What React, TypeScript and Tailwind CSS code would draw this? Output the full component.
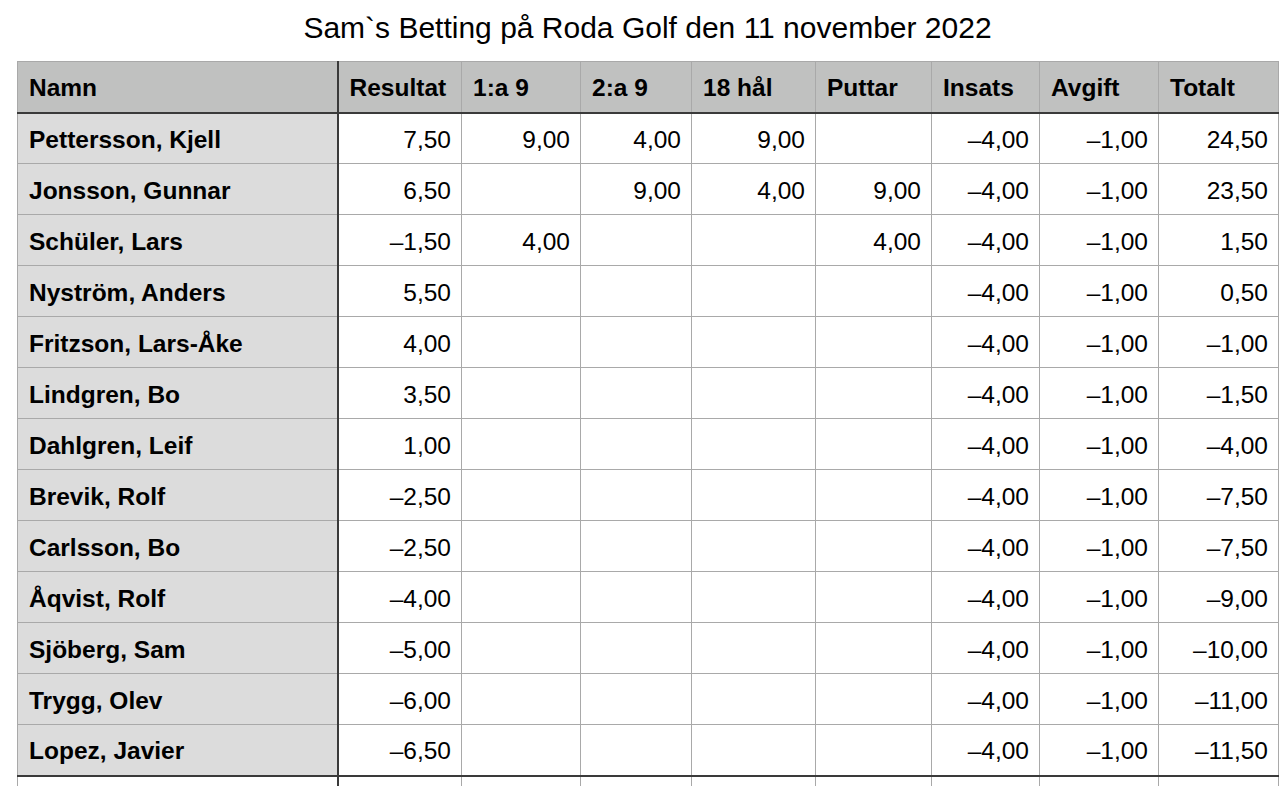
/**
 * Betting sheet — golf round results, one row per player.
 */
import React from "react";

type Row = {
  name: string;
  vals: string[]; // Resultat, 1:a 9, 2:a 9, 18 hål, Puttar, Insats, Avgift, Totalt
};

const HEADERS = ["Namn", "Resultat", "1:a 9", "2:a 9", "18 hål", "Puttar", "Insats", "Avgift", "Totalt"];
const COL_WIDTHS = ["w-[320px]", "w-[124px]", "w-[119px]", "w-[111px]", "w-[124px]", "w-[116px]", "w-[108px]", "w-[119px]", "w-[120px]"];

const ROWS: Row[] = [
  { name: "Pettersson, Kjell", vals: ["7,50", "9,00", "4,00", "9,00", "", "–4,00", "–1,00", "24,50"] },
  { name: "Jonsson, Gunnar", vals: ["6,50", "", "9,00", "4,00", "9,00", "–4,00", "–1,00", "23,50"] },
  { name: "Schüler, Lars", vals: ["–1,50", "4,00", "", "", "4,00", "–4,00", "–1,00", "1,50"] },
  { name: "Nyström, Anders", vals: ["5,50", "", "", "", "", "–4,00", "–1,00", "0,50"] },
  { name: "Fritzson, Lars-Åke", vals: ["4,00", "", "", "", "", "–4,00", "–1,00", "–1,00"] },
  { name: "Lindgren, Bo", vals: ["3,50", "", "", "", "", "–4,00", "–1,00", "–1,50"] },
  { name: "Dahlgren, Leif", vals: ["1,00", "", "", "", "", "–4,00", "–1,00", "–4,00"] },
  { name: "Brevik, Rolf", vals: ["–2,50", "", "", "", "", "–4,00", "–1,00", "–7,50"] },
  { name: "Carlsson, Bo", vals: ["–2,50", "", "", "", "", "–4,00", "–1,00", "–7,50"] },
  { name: "Åqvist, Rolf", vals: ["–4,00", "", "", "", "", "–4,00", "–1,00", "–9,00"] },
  { name: "Sjöberg, Sam", vals: ["–5,00", "", "", "", "", "–4,00", "–1,00", "–10,00"] },
  { name: "Trygg, Olev", vals: ["–6,00", "", "", "", "", "–4,00", "–1,00", "–11,00"] },
  { name: "Lopez, Javier", vals: ["–6,50", "", "", "", "", "–4,00", "–1,00", "–11,50"] },
];

export default function App() {
  return (
    <div className="h-[786px] w-[1286px] overflow-hidden bg-white font-['Liberation_Sans',Arial,sans-serif] text-black">
      <div className="ml-[17px] w-[1261px]">
        {/* Sheet title */}
        <h1 className="h-[61px] pt-[13px] text-center text-[30px] leading-none font-normal">
          Sam`s Betting på Roda Golf den 11 november 2022
        </h1>

        <table className="w-[1261px] table-fixed border-collapse text-[24.5px]">
          <colgroup>
            {COL_WIDTHS.map((w, i) => (
              <col key={i} className={w} />
            ))}
          </colgroup>
          <thead>
            <tr className="h-[51px] bg-[#c0c1c0]">
              {HEADERS.map((h, i) => (
                <th
                  key={h}
                  className={`border border-[#a9a9a9] border-b-2 border-b-[#3a3a3a] px-[11px] pt-[4px] text-left font-bold ${
                    i === 0 ? "border-r-2 border-r-[#3a3a3a]" : ""
                  }`}
                >
                  {h}
                </th>
              ))}
            </tr>
          </thead>
          <tbody>
            {ROWS.map((r, ri) => {
              const last = ri === ROWS.length - 1;
              return (
                <tr key={r.name} className="h-[51px]">
                  <td
                    className={`border border-[#a9a9a9] border-r-2 border-r-[#3a3a3a] bg-[#dcdcdc] px-[11px] pt-[4px] font-bold ${
                      last ? "border-b-2 border-b-[#3a3a3a]" : ""
                    }`}
                  >
                    {r.name}
                  </td>
                  {r.vals.map((v, vi) => (
                    <td
                      key={vi}
                      className={`border border-[#a9a9a9] px-[10px] pt-[4px] text-right ${
                        last ? "border-b-2 border-b-[#3a3a3a]" : ""
                      }`}
                    >
                      {v}
                    </td>
                  ))}
                </tr>
              );
            })}
          </tbody>
          <tfoot>
            {/* Footer row, cut off by the window edge */}
            <tr className="h-[51px]">
              {HEADERS.map((h, i) => (
                <td
                  key={h}
                  className={`border border-t-0 border-[#a9a9a9] ${i === 0 ? "border-r-2 border-r-[#3a3a3a]" : ""}`}
                />
              ))}
            </tr>
          </tfoot>
        </table>
      </div>
    </div>
  );
}
